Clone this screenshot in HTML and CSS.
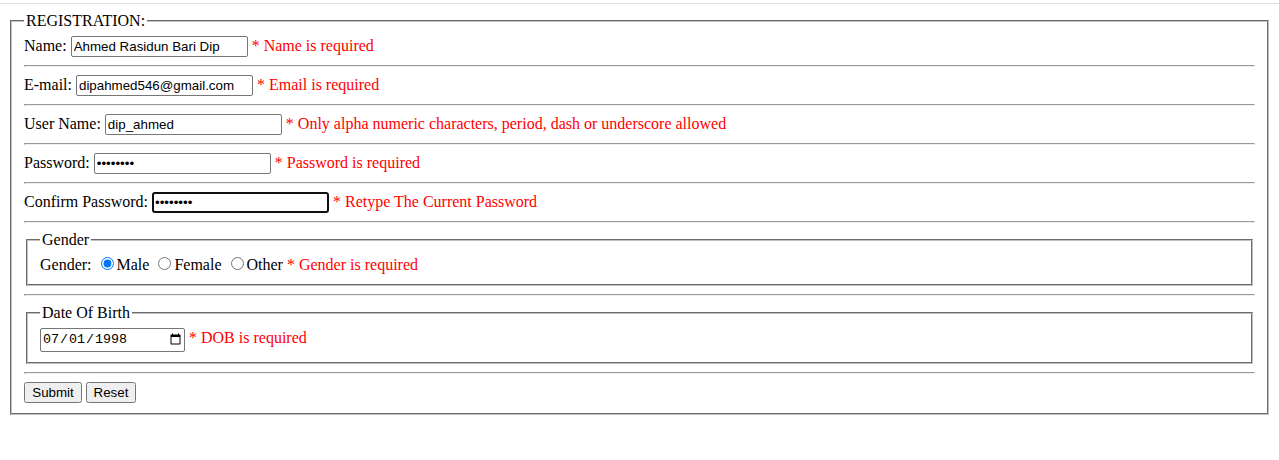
FILE: index.html
```html
<!DOCTYPE html>
<html>
<head>
<meta charset="utf-8">
<title>Registration</title>
<link rel="stylesheet" href="styles.css">
</head>
<body>
<div class="topline"></div>
<form class="reg-form">
  <fieldset class="outer">
    <legend>REGISTRATION:</legend>
    <div class="row">Name: <input class="txt" type="text" value="Ahmed Rasidun Bari Dip"> <span class="error">* Name is required</span></div>
    <hr>
    <div class="row">E-mail: <input class="txt" type="text" value="dipahmed546@gmail.com"> <span class="error">* Email is required</span></div>
    <hr>
    <div class="row">User Name: <input class="txt" type="text" value="dip_ahmed"> <span class="error">* Only alpha numeric characters, period, dash or underscore allowed</span></div>
    <hr>
    <div class="row">Password: <input class="txt" type="password" value="12345678"> <span class="error">* Password is required</span></div>
    <hr>
    <div class="row">Confirm Password: <input class="txt focused" type="password" value="12345678"> <span class="error">* Retype The Current Password</span></div>
    <hr>
    <fieldset class="inner">
      <legend>Gender</legend>
      Gender: <label><input type="radio" name="g" checked>Male</label>
      <label><input type="radio" name="g">Female</label>
      <label><input type="radio" name="g">Other</label>
      <span class="error">* Gender is required</span>
    </fieldset>
    <hr>
    <fieldset class="inner">
      <legend>Date Of Birth</legend>
      <input class="date" type="date" value="1998-07-01"> <span class="error">* DOB is required</span>
    </fieldset>
    <hr>
    <input class="btn btn-submit" type="submit" value="Submit">
    <input class="btn btn-reset" type="reset" value="Reset">
  </fieldset>
</form>
</body>
</html>
```
FILE: styles.css
```css
html, body {
  background: #ffffff;
}
body {
  margin: 0;
  font-family: "Liberation Serif", "Times New Roman", serif;
  font-size: 16px;
  color: #000;
}
.topline {
  height: 1px;
  margin-top: 3px;
  background: #dddddd;
}
.reg-form {
  margin: 8px 8px 8px;
}
fieldset {
  margin: 0 2px;
  border: 2px groove #c0c0c0;
  padding: 0.35em 0.75em 0.625em;
}
legend {
  padding: 0 2px;
}
.error {
  color: #ff0000;
}
.txt {
  font-family: "Liberation Sans", Arial, sans-serif;
  font-size: 13.333px;
  width: 177px;
  height: 21px;
  box-sizing: border-box;
  padding: 1px 2px;
  border: 1px solid #767676;
  border-radius: 2px;
}
.focused {
  border: 2px solid #101010;
  border-radius: 3px;
  padding: 0 1px;
}
.date {
  font-family: "Liberation Mono", "Courier New", monospace;
  font-size: 13.333px;
  width: 145px;
  height: 24px;
  box-sizing: border-box;
  border: 1px solid #767676;
  border-radius: 2px;
}
.btn {
  font-family: "Liberation Sans", Arial, sans-serif;
  font-size: 13.333px;
  height: 21px;
  box-sizing: border-box;
  padding: 1px 0;
  text-align: center;
}
.btn-submit {
  width: 58px;
}
.btn-reset {
  width: 50px;
}
hr {
  margin: 8px 0;
}
```
